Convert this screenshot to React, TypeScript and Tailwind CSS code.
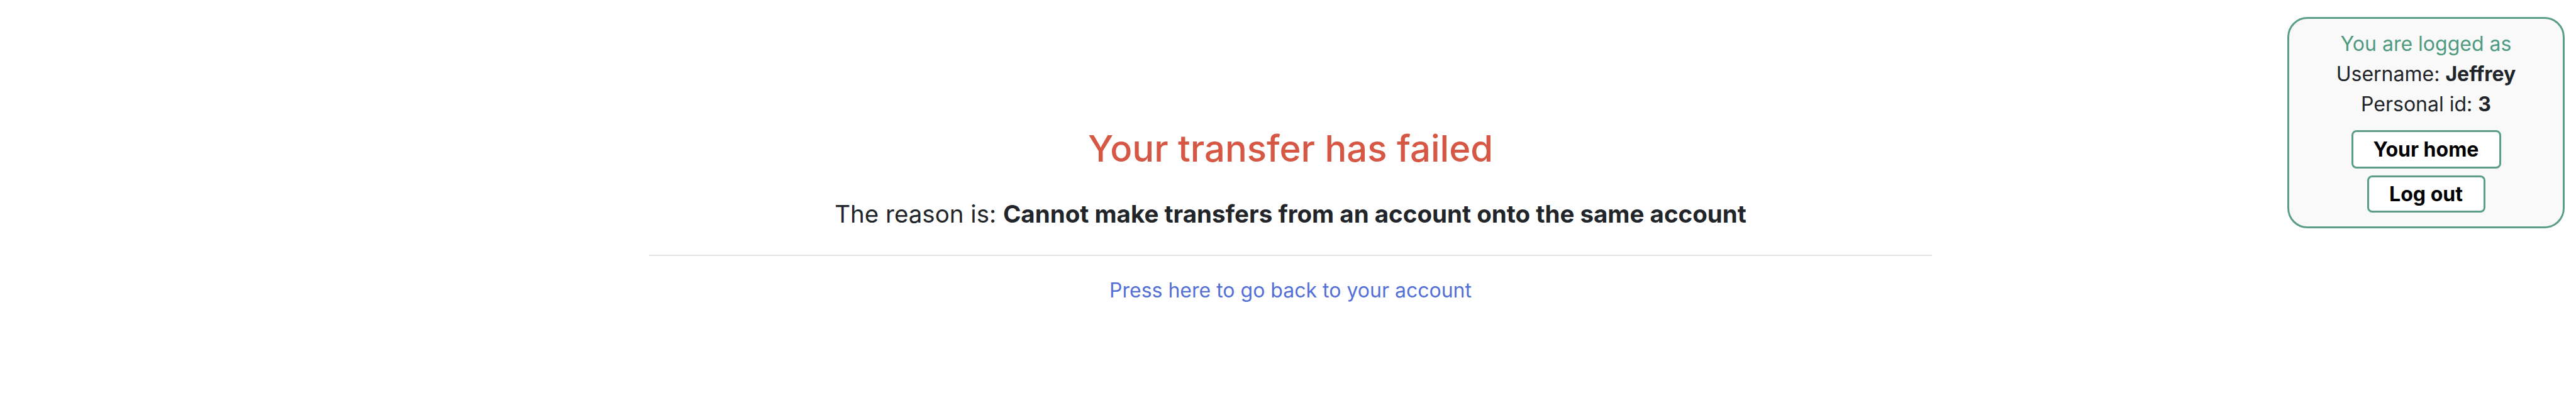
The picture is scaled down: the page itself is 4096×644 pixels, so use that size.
import React from "react";

/* ================= LOGIN BOX ================= */

function LoginBox() {
  return (
    <div className="absolute right-[18px] top-[27px] w-[441px] rounded-[32px] border-[3px] border-[#5a9e8a] bg-[#f9f9f9] px-4 pt-4 pb-[22px] text-center text-[32px] leading-[48px] text-[#212529]">
      <div className="text-[#4f9a80]">You are logged as</div>
      <div>
        Username: <b className="font-bold">Jeffrey</b>
      </div>
      <div>
        Personal id: <b className="font-bold">3</b>
      </div>
      <div className="mt-[17px] flex flex-col items-center gap-[11px]">
        <button className="h-[61px] w-[238px] rounded-[8px] border-[3px] border-[#5a9e8a] bg-white text-[32px] font-bold leading-none text-black">
          Your home
        </button>
        <button className="h-[59px] w-[188px] rounded-[8px] border-[3px] border-[#5a9e8a] bg-white text-[32px] font-bold leading-none text-black">
          Log out
        </button>
      </div>
    </div>
  );
}

/* ================= PAGE ================= */

export default function App() {
  return (
    <div className="relative h-[644px] w-full bg-white font-['Inter','Liberation_Sans',sans-serif]">
      <LoginBox />

      <div className="ml-[1032px] w-[2040px] pt-[201px] text-center">
        <h1 className="text-[58px] font-medium leading-[70px] text-[#d75745]">
          Your transfer has failed
        </h1>
        <p className="mt-[45px] text-[38.5px] leading-[48px] text-[#212529]">
          The reason is: <b className="font-bold">Cannot make transfers from an account onto the same account</b>
        </p>
        <hr className="mt-[41px] border-t-2 border-[#e3e3e3]" />
        <a href="#" className="mt-[35px] inline-block text-[32px] leading-[40px] text-[#5470d6]">
          Press here to go back to your account
        </a>
      </div>
    </div>
  );
}
